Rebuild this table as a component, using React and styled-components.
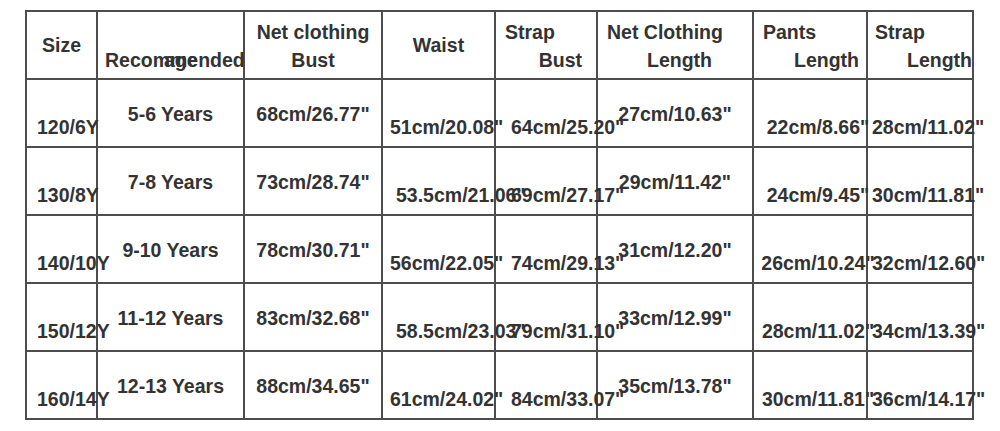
import React from 'react';
import styled, { createGlobalStyle } from 'styled-components';

const GlobalStyle = createGlobalStyle`
  html, body {
    margin: 0;
    padding: 0;
    background: #fff;
  }
`;

const LINE = '#4d4d4d';

const columns = [71, 147, 138, 113, 102, 156, 114, 106];

const header = [
  { center: true, lines: [{ t: 'Size' }] },
  {
    lines: [{ t: '' }, { t: 'Recommended', align: 'left', pl: 7 }],
    overlay: 'age'
  },
  { lines: [{ t: 'Net clothing' }, { t: 'Bust' }] },
  { center: true, lines: [{ t: 'Waist' }] },
  {
    lines: [
      { t: 'Strap', align: 'left', pl: 9 },
      { t: 'Bust', align: 'right', pr: 14 }
    ]
  },
  {
    lines: [
      { t: 'Net Clothing', align: 'left', pl: 9 },
      { t: 'Length', align: 'left', pl: 49 }
    ]
  },
  {
    lines: [
      { t: 'Pants', align: 'left', pl: 9 },
      { t: 'Length', align: 'right', pr: 7 }
    ]
  },
  {
    lines: [
      { t: 'Strap', align: 'left', pl: 7 },
      { t: 'Length', align: 'right', pr: 0 }
    ]
  }
];

// how each column places its value inside the cell
const cellSpec = [
  { align: 'left', pl: 10, low: true },
  { align: 'center', low: false },
  { align: 'center', low: false },
  { align: 'left', pl: 7, low: true },
  { align: 'left', pl: 15, low: true },
  { align: 'center', low: false },
  { align: 'center', pl: 16, low: true },
  { align: 'left', pl: 4, low: true }
];

const rows = [
  ['120/6Y', '5-6 Years', '68cm/26.77"', '51cm/20.08"', '64cm/25.20"', '27cm/10.63"', '22cm/8.66"', '28cm/11.02"'],
  ['130/8Y', '7-8 Years', '73cm/28.74"', '53.5cm/21.06"', '69cm/27.17"', '29cm/11.42"', '24cm/9.45"', '30cm/11.81"'],
  ['140/10Y', '9-10 Years', '78cm/30.71"', '56cm/22.05"', '74cm/29.13"', '31cm/12.20"', '26cm/10.24"', '32cm/12.60"'],
  ['150/12Y', '11-12 Years', '83cm/32.68"', '58.5cm/23.03"', '79cm/31.10"', '33cm/12.99"', '28cm/11.02"', '34cm/13.39"'],
  ['160/14Y', '12-13 Years', '88cm/34.65"', '61cm/24.02"', '84cm/33.07"', '35cm/13.78"', '30cm/11.81"', '36cm/14.17"']
];

const justify = {
  left: 'flex-start',
  center: 'center',
  right: 'flex-end'
};

const App = () => (
  <>
    <GlobalStyle />
    <Page>
      <Table $cols={columns}>
        {header.map((h, i) => (
          <HeadCell key={`h${i}`} $center={h.center}>
            {h.lines.map((l, j) => (
              <Line key={j} $align={l.align} $pl={l.pl} $pr={l.pr}>
                {l.t}
              </Line>
            ))}
            {h.overlay ? <Overlay>{h.overlay}</Overlay> : null}
          </HeadCell>
        ))}
        {rows.map((row, r) =>
          row.map((value, c) => {
            const spec = cellSpec[c];
            // half sizes sit a little further right in the waist column
            const pl = c === 3 && value.includes('.5') ? 13 : spec.pl;
            return (
              <Cell key={`${r}-${c}`} $low={spec.low}>
                <Line $align={spec.align} $pl={pl}>
                  {value}
                </Line>
              </Cell>
            );
          })
        )}
      </Table>
    </Page>
  </>
);

export default App;

const Page = styled.div`
  padding: 10px 0 0 25px;
  font-family: 'Liberation Sans', Arial, sans-serif;
  font-weight: 700;
  font-size: 19.5px;
  color: #333;
`;

const Table = styled.div`
  display: grid;
  grid-template-columns: ${p => p.$cols.map(w => `${w}px`).join(' ')};
  grid-auto-rows: 68px;
  width: max-content;
  border-left: 2px solid ${LINE};
  border-top: 2px solid ${LINE};
`;

const BaseCell = styled.div`
  box-sizing: border-box;
  position: relative;
  border-right: 2px solid ${LINE};
  border-bottom: 2px solid ${LINE};
  white-space: nowrap;
  min-width: 0;
`;

const HeadCell = styled(BaseCell)`
  padding-top: ${p => (p.$center ? 0 : 6)}px;
  ${p =>
    p.$center &&
    `
    display: flex;
    flex-direction: column;
    justify-content: center;
  `}
`;

const Cell = styled(BaseCell)`
  padding-top: ${p => (p.$low ? 33 : 20)}px;
`;

const Line = styled.div`
  display: flex;
  justify-content: ${p => justify[p.$align || 'center']};
  height: 28px;
  line-height: 28px;
  padding-left: ${p => p.$pl || 0}px;
  padding-right: ${p => p.$pr || 0}px;
`;

const Overlay = styled.span`
  position: absolute;
  left: 66px;
  top: 34px;
  line-height: 28px;
`;
